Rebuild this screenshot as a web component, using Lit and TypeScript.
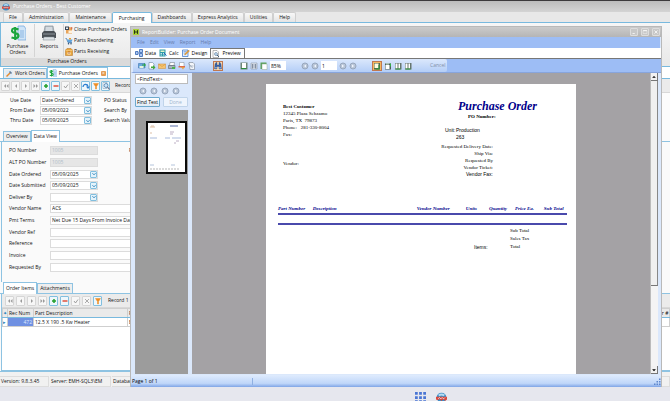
import { LitElement, html, svg, css, nothing, TemplateResult } from "lit";
import { customElement } from "lit/decorators.js";
import { classMap } from "lit/directives/class-map.js";

const shapes: Record<string, TemplateResult> = {
  logo: svg`<circle cx="8" cy="8" r="7" fill="#3d8fc9"/><path d="M3 4Q8 0 13 4L11 6Q8 4 5 6Z" fill="#b8dcf0"/><path d="M0 7h16v4l-3 2-2-3-3 3-3-3-2 2-3-1z" fill="#d8483c"/><path d="M3 10l2-2 2 2 2-2 2 2 2-2" stroke="#fff" stroke-width="1" fill="none"/>`,
  dollar: svg`<path d="M8 1h6l2 3v11H8z" fill="#cfe4f7" stroke="#6fa4d8" stroke-width=".7"/><path d="M10 6h4M10 8h4M10 10h4M10 12h4" stroke="#6fa4d8" stroke-width=".7"/><path d="M8.500 4.500Q2 2 2 5.500Q2 7.500 5 8Q8.500 8.500 8.500 11Q8 14.500 1.500 12.500M5.200 2v13" stroke="#1ba53c" stroke-width="2.200" fill="none"/>`,
  printer: svg`<path d="M4 1h8l1 6H3z" fill="#b9c2ca" stroke="#7b848c" stroke-width=".6"/><path d="M5 3h6M5 5h6" stroke="#eef2f5"/><path d="M1 8l2-2h10l2 2v5H1z" fill="#4a5056"/><path d="M2 9h12" stroke="#8d959c"/><path d="M3 12h10l1 3H2z" fill="#dde2e6" stroke="#7b848c" stroke-width=".5"/>`,
  close: svg`<path d="M2 2h8l4 4v9H2z" fill="#e8a55c"/><path d="M0 1h8v7H0z" fill="#3a4655"/><path d="M2 3h4v3H2z" fill="#e8eef4"/><path d="M7 9h7v5H7z" fill="#fff1dc"/><path d="M11 2l4 1-1 5z" fill="#d4572e"/>`,
  cart: svg`<path d="M1 3h2l3 8h8" stroke="#356ea8" stroke-width="1.500" fill="none"/><path d="M4 5h11l-2 5H6z" fill="#5ea3dd"/><path d="M8 2h4v3H8z" fill="#e6a33b"/><circle cx="7" cy="13.500" r="1.500" fill="#23496f"/><circle cx="12" cy="13.500" r="1.500" fill="#23496f"/>`,
  box: svg`<path d="M1 4l3-3h8l3 3v11H1z" fill="#e9a63c" stroke="#b06f1c"/><path d="M1 5h14" stroke="#fbe0a8"/><path d="M5 8h6v5H5z" fill="#fff0cf"/><path d="M8 6v5M6 9l2 2 2-2" stroke="#a74b12" stroke-width="1.300" fill="none"/>`,
  wrench: svg`<path d="M1 1h14v14H1z" fill="#dcebf7"/><path d="M3 13L12 4" stroke="#e58a2c" stroke-width="3"/><path d="M10 2l4 4-2 2-4-4z" fill="#587ea6"/>`,
  rb: svg`<path d="M0 0h16v16H0z" fill="#a8cf38"/><path d="M4 3v10M12 3v10M4 8h8" stroke="#1d2b12" stroke-width="2.400"/>`,
  data: svg`<path d="M1 5h5v6H1zM9 1h6v6H9zM9 9h6v6H9z" fill="#a9c6f2" stroke="#3565b0" stroke-width="1.600"/><path d="M6 8h3" stroke="#3565b0"/>`,
  calc: svg`<path d="M1 1h12v14H1z" fill="#2f9aa8"/><path d="M3 3h8v3H3z" fill="#e4f5c9"/><path d="M3 9h3M8 9h3M3 12h3M8 12h3" stroke="#fff" stroke-width="1.500"/><path d="M10 8l5 5" stroke="#2a5ec0" stroke-width="2"/>`,
  design: svg`<path d="M1 2h11v13H1z" fill="#e5f0fd" stroke="#3f79cc" stroke-width="1.500"/><path d="M3 5h6M3 8h4" stroke="#3f79cc"/><path d="M5 12l1-3 7-7 2 2-7 7z" fill="#e9a23a" stroke="#9a5b12" stroke-width=".5"/>`,
  preview: svg`<path d="M2 1h8l3 3v11H2z" fill="#fff" stroke="#777"/><circle cx="8" cy="8" r="3" fill="#bfdcf5" stroke="#45617d"/><path d="M10 10l4 4" stroke="#45617d" stroke-width="2"/>`,
  save: svg`<path d="M1 3h13v9H1z" fill="#68a7de" stroke="#2d67a5"/><path d="M3 8h8v4H3z" fill="#e5f3dc"/><path d="M8 5h4V2l4 4-4 4V7H8z" fill="#2fa64a"/>`,
  open: svg`<path d="M2 1h7l3 3v10H2z" fill="#fff" stroke="#55718f"/><path d="M6 9h4V6l5 5-5 4v-3H6z" fill="#43a93c"/>`,
  mail: svg`<path d="M1 4h14v9H1z" fill="#f5c572" stroke="#d18a34"/><path d="M1 4l7 5 7-5" stroke="#d18a34" fill="none"/>`,
  print: svg`<path d="M4 1h9l-1 6H3z" fill="#fff" stroke="#66717c"/><path d="M1 7h13v6H1z" fill="#a9b3bd" stroke="#46515c"/><path d="M8 10h6v4H8z" fill="#4bb44a"/>`,
  pdf: svg`<path d="M3 1h9v8H3z" fill="#fff" stroke="#7c8894"/><path d="M1 8h13v3H1z" fill="#dd6b4c"/><path d="M6 10h7l-3 5z" fill="#e7a13b"/>`,
  setup: svg`<path d="M2 1h8l3 3v11H4z" fill="#f3f6fa" stroke="#66717c"/><path d="M1 3l8 9M4 8h7" stroke="#6c7f96"/>`,
  find: svg`<path d="M2 4l2-3h2v5h4V1h2l2 3 1 10h-5V9H6v5H1z" fill="#3963a8" stroke="#1e3c70" stroke-width=".6"/><path d="M3 10h2v3H3zM11 10h2v3h-2z" fill="#c8dcf8"/>`,
  page: svg`<path d="M1 1h14v14H1z" fill="#6f8676"/><path d="M4 2h8v10H4z" fill="#fff"/><path d="M2 13h11" stroke="#2b8b3b" stroke-width="2"/>`,
  width: svg`<path d="M2 2h12v12H2z" fill="#e5ecf5" stroke="#7a8696"/><path d="M5 4v9M3 6h10M3 10h10M11 4v9" stroke="#5d6c80" stroke-width="1.200"/>`,
  full: svg`<path d="M1 1h12v13H1z" fill="#58a058"/><path d="M4 4h10v11H4z" fill="#fff" stroke="#93a893"/>`,
  single: svg`<path d="M2 2h12v13H2z" fill="#52694f"/><path d="M3 3h8v9H3z" fill="#fffbe0"/><path d="M12 6v8M5 14h8" stroke="#2d9a3d" stroke-width="2"/>`,
  cont: svg`<path d="M2 3h12v12H2z" fill="#4f5f57"/><path d="M3 6h8v8H3z" fill="#fff"/><path d="M4 3h6v2H4z" fill="#cfe9cf"/><path d="M13 3v6" stroke="#34b049" stroke-width="2"/>`,
  two: svg`<path d="M2 2h13v13H2z" fill="#66756f"/><path d="M3 3h4v10H3zM9 3h3v10H9z" fill="#fff"/><path d="M3 14h10" stroke="#2d9a3d" stroke-width="2"/>`,
  first: svg`<path d="M8 4L4 8l4 4zM13 4L9 8l4 4z" fill="#9a9a9a"/>`,
  prev: svg`<path d="M10 4L6 8l4 4z" fill="#9a9a9a"/>`,
  next: svg`<path d="M6 4l4 4-4 4z" fill="#9a9a9a"/>`,
  last: svg`<path d="M3 4l4 4-4 4zM8 4l4 4-4 4z" fill="#9a9a9a"/>`,
  plus: svg`<path d="M8 4v8M4 8h8" stroke="#25a02c" stroke-width="3"/>`,
  minus: svg`<path d="M3 8h10" stroke="#e0503c" stroke-width="3"/>`,
  check: svg`<path d="M4 8l3 4 5-7" stroke="#8a8a8a" stroke-width="1.600" fill="none"/>`,
  cross: svg`<path d="M4 4l8 8M12 4l-8 8" stroke="#8a8a8a" stroke-width="1.400"/>`,
  redo: svg`<path d="M2 10Q3 4 8 5Q11 5 12 9" stroke="#2c7ed0" stroke-width="2.600" fill="none"/><path d="M8 9h8l-4 5z" fill="#2c7ed0"/>`,
  filter: svg`<path d="M3 3h10L9 9v5H7V9z" fill="#ee8d22" stroke="#ee8d22"/>`,
  search: svg`<path d="M2 1h8v12H2z" fill="#fff" stroke="#7392b0"/><circle cx="8" cy="7" r="4" fill="#cbe5fa" stroke="#3c6f9e" stroke-width="1.400"/><path d="M11 10l4 5" stroke="#6b6f86" stroke-width="2.400"/>`,
  down: svg`<path d="M4 6l4 4 4-4" stroke="#2a7fb8" stroke-width="2.600" fill="none"/>`,
  circ: svg`<circle cx="8" cy="8" r="6" fill="#b9c6d8" stroke="#98a7bd" stroke-width="2"/><path d="M10 5L6 8l4 3z" fill="#f2f6fc"/>`,
  circr: svg`<circle cx="8" cy="8" r="6" fill="#b9c6d8" stroke="#98a7bd" stroke-width="2"/><path d="M6 5l4 3-4 3z" fill="#f2f6fc"/>`,
  min: svg`<path d="M4 12h6" stroke="#fff" stroke-width="2"/>`,
  max: svg`<path d="M3 5h10v7H3z" stroke="#fff" fill="none"/><path d="M3 4h10" stroke="#fff" stroke-width="2"/>`,
  shut: svg`<path d="M4 4l8 8M12 4l-8 8" stroke="#fff" stroke-width="2"/>`,
  up: svg`<path d="M3 10l5-5 5 5z" fill="#000"/>`,
  dn: svg`<path d="M3 6l5 5 5-5z" fill="#000"/>`,
  apps: svg`<path d="M0 0h4v4H0zM6 0h4v4H6zM12 0h4v4h-4zM0 6h4v4H0zM6 6h4v4H6zM12 6h4v4h-4zM0 12h4v4H0zM6 12h4v4H6zM12 12h4v4h-4z" fill="#4a76d4"/>`,
  grip: svg`<path d="M12 3h3v3h-3zM12 8h3v3h-3zM12 13h3v3h-3zM7 8h3v3H7zM7 13h3v3H7zM2 13h3v3H2z" fill="#5e86cc"/>`,
};

const icon = (name: string, size = "s8") =>
  html`<svg class="ico ${size}" viewBox="0 0 16 16" aria-hidden="true">${shapes[name]}</svg>`;

const base = css`
  * { box-sizing: border-box; }
  button, input, select {
    font: inherit; color: inherit; margin: 0; padding: 0; border: 0;
    background: none; border-radius: 0; min-width: 0; outline: none;
  }
  button { display: flex; align-items: center; justify-content: center; white-space: nowrap; }
  .ico { display: block; flex: none; }
  .s6 { width: 6px; height: 6px; }
  .s8 { width: 8px; height: 8px; }
  .s11 { width: 11px; height: 11px; }
  .s16 { width: 16px; height: 16px; }
`;

@customElement("report-page")
class ReportPage extends LitElement {
  static styles = [base, css`
    :host {
      display: block; background: #fff; color: #000; padding: 16px 9px 0 12px;
      font: 5px/7px "Liberation Serif", serif; white-space: nowrap;
    }
    .top { display: flex; justify-content: space-between; height: 104px; }
    .from { padding: 3px 0 0 5px; }
    .vendor { margin-top: 22px; }
    .right { display: flex; flex-direction: column; align-items: flex-end; padding-right: 30px; }
    .title { margin: 0; font: italic bold 12px/13px "Liberation Serif", serif; color: #00008b; }
    .po { font-weight: bold; width: 70px; padding-left: 1px; }
    .unit { display: grid; grid-template-columns: 11px auto; width: 92px; margin: 7px 0 2px; font-family: "Liberation Sans", sans-serif; }
    .fields { width: 96px; display: flex; flex-direction: column; }
    .fields span { width: 52px; display: flex; justify-content: flex-end; }
    .sans { font-family: "Liberation Sans", sans-serif; }
    table { width: 100%; border-collapse: collapse; table-layout: fixed; }
    th { padding: 0 0 1px; height: 10px; text-align: left; font: italic bold 5px/7px "Liberation Serif", serif; color: #00008b; border-bottom: 2px solid #4a4aac; }
    td { height: 10px; padding: 0; border-bottom: 2px solid #4a4aac; }
    .c0 { width: 12%; } .c1 { width: 36%; } .c2 { width: 17%; } .c3 { width: 8%; }
    .c4 { width: 9%; } .c5 { width: 10%; } .c6 { width: 8%; }
    .totals { display: grid; grid-template-columns: 36px 57px; justify-content: end; line-height: 8px; padding-top: 2px; }
  `];
  render() {
    const cols = ["Part Number", "Description", "Vendor Number", "Units", "Quantity", "Price Ea.", "Sub Total"];
    return html`
      <div class="top">
        <div class="from"><div><b>Best Customer</b></div><div>12345 Plaza Sehzamo</div><div>Paris, TX&nbsp; 79873</div><div>Phone:&nbsp;&nbsp; 281-330-8004</div><div>Fax:</div><div class="vendor">Vendor:</div></div>
        <div class="right">
          <h1 class="title">Purchase Order</h1>
          <div class="po">PO Number:</div>
          <div class="unit"><span>Unit:</span><span>Production</span><span></span><span>263</span></div>
          <div class="fields"><span>Requested Delivery Date:</span><span>Ship Via:</span><span>Requested By</span><span>Vendor Ticket:</span><span class="sans">Vendor Fax:</span></div>
        </div>
      </div>
      <table>
        <thead><tr>${cols.map((c, i) => html`<th class="c${i}">${c}</th>`)}</tr></thead>
        <tbody><tr>${cols.map(() => html`<td></td>`)}</tr></tbody>
      </table>
      <div class="totals"><span></span><span>Sub Total</span><span></span><span>Sales Tax</span><span class="sans">Items:</span><span>Total</span></div>
    `;
  }
}

@customElement("report-window")
class ReportWindow extends LitElement {
  static styles = [base, css`
    :host {
      display: flex; flex-direction: column; background: #dbe8fb; overflow: hidden;
      border: solid #b9b9b9; border-width: 1px 1px 0 1px; font: 5px/7px "Open Sans", sans-serif; color: #000;
    }
    .title { display: flex; align-items: center; gap: 3px; height: 10px; flex: none; padding: 0 1px 0 2px; background: linear-gradient(#cbcbcb, #b5b5b5); color: #fff; }
    .title .name { flex: 1; }
    .title button { width: 8px; height: 8px; border: 1px solid #ddd; background: #c8c8c8; border-radius: 1px; }
    .menu { display: flex; align-items: center; gap: 5px; height: 11px; flex: none; padding-left: 6px; background: #9dbdf5; color: #667cab; margin-right: 1px; }
    .tabs { display: flex; height: 11px; flex: none; background: #fff; border-bottom: 1px solid #777; padding: 0 0 0 3px; }
    .tabs button { gap: 2px; padding: 0 2px 0 1px; }
    .tabs .on { border: solid #777; border-width: 1px 1px 0 1px; padding: 0 3px 0 1px; margin-left: 1px; }
    .bar { display: flex; height: 14px; flex: none; background: #9dbdf5; border-bottom: 1px solid #88a5dc; border-left: 2px solid #dbe8fb; }
    .tools { display: flex; align-items: center; gap: 2px; padding: 0 2px 0 5px; background: linear-gradient(#dbe8fc, #b4cef7); border-radius: 0 2px 2px 0; }
    .gap { width: 13px; }
    .gap.near { width: 11px; }
    .tools .hot { border: 1px solid #c07850; background: #f6d9b4; padding: 0; width: 10px; height: 10px; }
    .tools .sel { border: 1px solid #c07850; background: #f4b860; width: 10px; height: 10px; }
    .tools input { background: #fff; width: 16px; height: 9px; padding-left: 1px; }
    .cancel { color: #8290a8; padding-left: 16px; }
    .body { flex: 1; display: flex; min-height: 0; padding: 0 3px 0 4px; }
    .side { width: 53px; flex: none; display: flex; flex-direction: column; margin-right: 4px; }
    .find { border: 1px solid #bbb; background: #fff; height: 10px; width: 100%; padding-left: 1px; flex: none; margin-top: 1px; }
    .circles { display: flex; gap: 3px; padding: 3px 4px 2px; height: 13px; align-items: center; flex: none; }
    .circles button { width: 8px; }
    .acts { display: flex; gap: 3px; flex: none; height: 10px; margin-bottom: 3px; }
    .acts button { flex: 1; border: 1px solid #6da9cd; border-radius: 1px; background: linear-gradient(#fff, #dfeaf5); }
    .acts .off { color: #9fb6ce; border-color: #c0d4ea; background: #eff5fd; }
    .thumbs { flex: 1; background: #9c9c9c; padding: 11px 1px 0 11px; min-height: 0; }
    .thumb { display: block; width: 41px; height: 53px; border: 2px solid #0c0c0c; background: #fff; }
    .view { flex: 1; background: #a4a2a5; display: flex; justify-content: center; padding-top: 11px; min-width: 0; overflow: hidden; }
    report-page { width: 310px; flex: none; }
    .scroll { width: 8px; flex: none; background: #f4f4f4; display: flex; flex-direction: column; border-left: 1px solid #bbb; }
    .scroll button { height: 8px; flex: none; border-right: 1px solid #777; border-bottom: 1px solid #777; background: #f2f2f2; }
    .track { flex: 1; }
    .knob { height: 72%; background: #f0f0f0; border-right: 1px solid #888; border-bottom: 1px solid #777; }
    .status { height: 12px; flex: none; display: flex; align-items: center; margin-top: 1px; background: linear-gradient(#dfebfd, #bfd6f9 70%, #7fa5e6); padding-left: 1px; }
    .status span { width: 121px; border-right: 1px solid #8fb0e2; }
    .status .fill { flex: 1; }
  `];
  render() {
    const tool = (n: string, c = "") => html`<button class=${c} aria-label=${n}>${icon(n)}</button>`;
    return html`
      <div class="title">${icon("rb", "s6")}<span class="name">ReportBuilder: Purchase Order Document</span>${["min", "max", "shut"].map(n => html`<button aria-label=${n}>${icon(n, "s6")}</button>`)}</div>
      <div class="menu">${["File", "Edit", "View", "Report", "Help"].map(m => html`<button>${m}</button>`)}</div>
      <div class="tabs">${[["data", "Data"], ["calc", "Calc"], ["design", "Design"], ["preview", "Preview"]].map(([i, t]) => html`<button class=${classMap({ on: t === "Preview" })}>${icon(i)}${t}</button>`)}</div>
      <div class="bar"><div class="tools">
        ${["save", "open", "mail", "print", "pdf", "setup"].map(n => tool(n))}
        <span class="gap"></span>${tool("find", "hot")}<span class="gap"></span>
        ${["page", "width", "full"].map(n => tool(n))}<input aria-label="Zoom" value="85%">
        <span class="gap near"></span>${tool("circ")}${tool("circ")}<input aria-label="Page" value="1">${tool("circr")}${tool("circr")}
        <span class="gap near"></span>${tool("single", "sel")}${tool("cont")}${tool("two")}${tool("two")}
        <button class="cancel">Cancel</button>
      </div></div>
      <div class="body">
        <div class="side">
          <input class="find" aria-label="Find text" value="&lt;FindText&gt;">
          <div class="circles">${["circ", "circ", "circr", "circr"].map(n => tool(n))}</div>
          <div class="acts"><button>Find Text</button><button class="off">Done</button></div>
          <div class="thumbs"><svg class="thumb" viewBox="0 0 37 49" aria-hidden="true"><path d="M2 4h5M3 3h3M2 10h2" stroke="#dcbfa6"/><path d="M22 3h8" stroke="#5a6ea8"/><path d="M22 9h4M22 11h3M26 20h2M28 18h3" stroke="#bcaec4"/><path d="M2 15h7M17 15h5M24 15h9" stroke="#a9bbdc"/><path d="M2 42h4M23 42h4" stroke="#b4c4dc"/><path d="M2 46h29" stroke="#b5b5b5" stroke-dasharray="2 1"/></svg></div>
        </div>
        <div class="view"><report-page></report-page></div>
        <div class="scroll"><button aria-label="Up">${icon("up", "s6")}</button><div class="track"><div class="knob"></div></div><button aria-label="Down">${icon("dn", "s6")}</button></div>
      </div>
      <div class="status"><span>Page 1 of 1</span><div class="fill"></div>${icon("grip", "s8")}</div>
    `;
  }
}

@customElement("app-root")
class AppRoot extends LitElement {
  static styles = [base, css`
    :host {
      display: flex; flex-direction: column; position: relative; height: 100vh; min-height: 400px; overflow: hidden;
      font: 5px/7px "Open Sans", sans-serif; color: #111; background: #fafafa; white-space: nowrap;
    }
    .title { height: 12px; flex: none; display: flex; align-items: center; gap: 3px; padding-left: 2px; border-top: 1px solid #3c3a3c; background: linear-gradient(#bcbcbc, #d4d4d4); color: #fff; }
    .rtabs { height: 11px; flex: none; display: flex; align-items: stretch; padding-left: 3px; background: #e8e8e8; border-bottom: 1px solid #78b9de; }
    .rtabs button { padding: 0 5px; border: solid #cfcfcf; border-width: 1px 1px 0; border-radius: 2px 2px 0 0; background: linear-gradient(#f8f8f8, #e4e4e4); }
    .rtabs .on { background: #fff; border-color: #78b9de; margin-bottom: -1px; padding: 0 6px; }
    .ribbon { height: 44px; flex: none; border: solid #78b9de; border-width: 0 0 1px 1px; background: linear-gradient(#f6f6f6, #e8e8e8); display: flex; }
    .group { width: 132px; display: flex; flex-direction: column; }
    .cmds { flex: 1; display: flex; padding: 1px 0; }
    .big { flex-direction: column; line-height: 6px; width: 33px; white-space: normal; gap: 2px; justify-content: flex-start; padding-top: 1px; }
    .big.rep { width: 30px; border: solid #d4d4d4; border-width: 0 1px; }
    .small { display: flex; flex-direction: column; padding-left: 1px; }
    .small button { height: 11px; gap: 1px; justify-content: flex-start; }
    .cap { height: 8px; flex: none; text-align: center; background: #dadada; }
    .docs { height: 12px; flex: none; display: flex; align-items: flex-end; padding: 1px 0 0 3px; background: #fff; border-bottom: 1px solid #78b9de; }
    .docs button { height: 10px; border: 1px solid #8ec3e2; border-bottom: 0; gap: 2px; padding: 0 1px; background: #eee; }
    .docs .on { height: 11px; background: #fff; }
    .x { background: #e49a50; color: #fff; line-height: 5px; width: 5px; border-radius: 1px; margin-left: 1px; }
    .nav { height: 14px; flex: none; display: flex; align-items: center; gap: 1px; padding-left: 1px; background: #ebebeb; border-bottom: 1px solid #d8d8d8; }
    .nav button { width: 9px; height: 10px; border: 1px solid #d6d6d6; border-radius: 1px; background: #f7f7f7; }
    .nav .act { border-color: #82bfdf; background: #eef7fc; }
    .nav span { margin-left: 4px; }
    .filters { flex: none; display: grid; grid-template-columns: 30px 52px auto; column-gap: 0; row-gap: 1px; padding: 3px 0 5px 10px; align-items: center; background: #fcfcfc; }
    .filters .extra { padding-left: 12px; }
    .field { display: flex; height: 9px; border: 1px solid #dcdcdc; background: #fff; align-items: center; }
    .field input, .field select { flex: 1; width: 100%; height: 7px; line-height: 7px; padding-left: 1px; appearance: none; }
    .field button, .arrow { width: 7px; height: 7px; flex: none; border: 1px solid #82bfdf; border-radius: 1px; background: #e4f3fb; display: flex; align-items: center; justify-content: center; }
    .off { background: #e6e6e6; color: #b0bcc8; }
    .tabs { height: 12px; flex: none; display: flex; align-items: stretch; padding: 0 0 0 3px; border-bottom: 1px solid #8ec3e2; }
    .tabs button { border: 1px solid #8ec3e2; border-bottom: 0; padding: 0 2px; background: #eee; margin-top: 1px; }
    .tabs .on { background: #fff; margin: 0 0 -1px; }
    .form { flex: 1; min-height: 0; display: grid; grid-template-columns: 41px 48px 31px auto; grid-auto-rows: 1fr; align-items: center; padding: 3px 14px 9px 7px; border-left: 1px solid #8ec3e2; margin-left: 1px; }
    .form label { grid-column: 1; }
    .form .wide { grid-column: 2 / 5; }
    .form .note { padding-left: 31px; }
    .items { border: solid #8ec3e2; border-width: 0 0 1px 1px; margin-left: 1px; flex: none; height: 77px; background: #fff; }
    .items .nav { padding-left: 3px; gap: 2px; }
    table { width: 100%; border-collapse: collapse; table-layout: fixed; border-top: 1px solid #78b9de; }
    th, td { padding: 0 1px; height: 9px; text-align: left; font-weight: normal; border: 1px solid #cfcfcf; overflow: hidden; line-height: 7px; }
    th { background: #eaeaea; border-bottom-color: #78b9de; }
    .mark { width: 5px; color: #2a7fb8; padding: 0; }
    .rec { width: 26px; } .part { width: 94px; } .endc { width: 12px; }
    td.rec { background: #6f90e2; color: #dfe8ff; text-align: right; }
    .status { height: 16px; flex: none; display: flex; padding-top: 4px; gap: 1px; background: #f1f1f1; border-top: 1px solid #8ec3e2; }
    .status span { border: 1px solid #ddd; border-left: 0; padding: 1px 0 0 1px; }
    .st0 { width: 49px; } .st1 { width: 61px; } .st2 { flex: 1; }
    .task { height: 14px; flex: none; background: #e6e7ee; display: flex; align-items: flex-end; gap: 10px; padding-left: 62%; overflow: hidden; }
    .task .ico { margin-bottom: -2px; }
    report-window { position: absolute; left: 130px; right: 8px; top: 26px; bottom: 14px; z-index: 1; }
  `];
  nav(names: string[], active: string[]) {
    return names.map(n => html`<button aria-label=${n} class=${classMap({ act: active.includes(n) })}>${icon(n, "s8")}</button>`);
  }
  render() {
    const steps = ["first", "prev", "next", "last", "plus", "minus", "check", "cross"];
    const fields: [string, string, string][] = [
      ["PO Number", "1005", "off"], ["ALT PO Number", "1005", "off"], ["Date Ordered", "05/09/2025", "date"],
      ["Date Submitted", "05/09/2025", "date"], ["Deliver By", "", "date"], ["Vendor Name", "ACS", "wide"],
      ["Pmt Terms", "Net Due 15 Days From Invoice Date", "wide"], ["Vendor Ref", "", "wide"],
      ["Reference", "", "wide"], ["Invoice", "", "wide"], ["Requested By", "", "wide"],
    ];
    const drop = html`<button aria-label="Open">${icon("down", "s6")}</button>`;
    return html`
      <div class="title">${icon("logo", "s8")}<span>Purchase Orders - Best Customer</span></div>
      <div class="rtabs">${["File", "Administration", "Maintenance", "Purchasing", "Dashboards", "Express Analytics", "Utilities", "Help"].map(t => html`<button class=${classMap({ on: t === "Purchasing" })}>${t}</button>`)}</div>
      <div class="ribbon"><div class="group">
        <div class="cmds">
          <button class="big">${icon("dollar", "s16")}Purchase Orders</button>
          <button class="big rep">${icon("printer", "s16")}Reports</button>
          <div class="small"><button>${icon("close")}Close Purchase Orders</button><button>${icon("cart")}Parts Reordering</button><button>${icon("box")}Parts Receiving</button></div>
        </div>
        <div class="cap">Purchase Orders</div>
      </div></div>
      <div class="docs"><button>${icon("wrench")}Work Orders</button><button class="on">${icon("dollar")}Purchase Orders<span class="x">×</span></button></div>
      <div class="nav">${this.nav([...steps, "redo", "filter", "search"], ["plus", "minus", "redo", "filter", "search"])}<span>Record</span></div>
      <div class="filters">
        <label for="use">Use Date</label><div class="field"><select id="use"><option>Date Ordered</option></select><span class="arrow">${icon("down", "s6")}</span></div><span class="extra">PO Status</span>
        <label for="from">From Date</label><div class="field"><input id="from" value="05/09/2022">${drop}</div><span class="extra">Search By</span>
        <label for="thru">Thru Date</label><div class="field"><input id="thru" value="05/09/2025">${drop}</div><span class="extra">Search Value</span>
      </div>
      <div class="tabs"><button>Overview</button><button class="on">Data View</button></div>
      <div class="form">${fields.map(([l, v, k], i) => html`<label for="f${i}">${l}</label><div class="field ${k}"><input id="f${i}" .value=${v} ?disabled=${k === "off"}>${k === "date" ? drop : nothing}</div>${i === 0 ? html`<span class="note">P</span>` : nothing}`)}</div>
      <div class="tabs"><button class="on">Order Items</button><button>Attachments</button></div>
      <div class="items">
        <div class="nav">${this.nav([...steps, "filter"], ["plus", "minus", "filter"])}<span>Record 1</span></div>
        <table>
          <thead><tr><th class="mark">✦</th><th class="rec">Rec Num</th><th class="part">Part Description</th><th>P</th><th class="endc">er #</th></tr></thead>
          <tbody><tr><td class="mark">▸</td><td class="rec">472</td><td>12.5 X 190 .5 Kw Heater</td><td>E</td><td></td></tr></tbody>
        </table>
      </div>
      <div class="status"><span class="st0">Version: 9.8.3.45</span><span class="st1">Server: EMH-SQL3\\EM</span><span class="st2">Databas</span></div>
      <div class="task">${icon("apps", "s11")}${icon("logo", "s11")}</div>
      <report-window></report-window>
    `;
  }
}
